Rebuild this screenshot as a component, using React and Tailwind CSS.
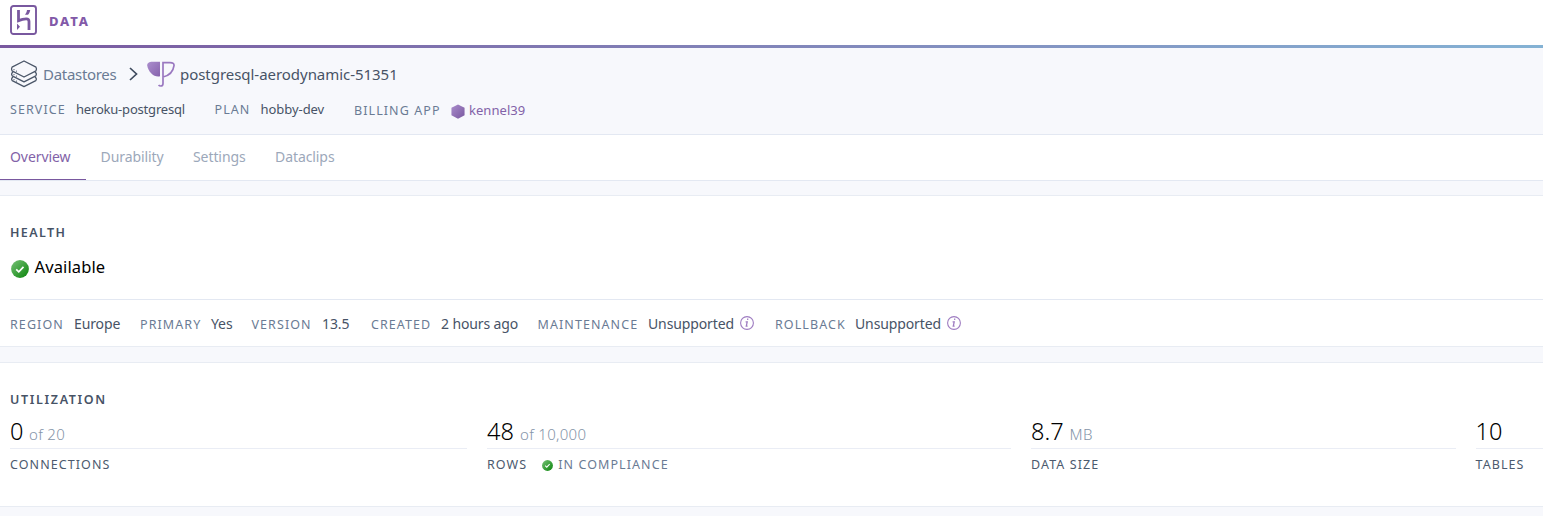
import React from "react";

const T = ({ className = "", children }) => (
  <span className={"block shrink-0 whitespace-nowrap " + className}>{children}</span>
);

const Check = ({ className }) => (
  <svg viewBox="0 0 18 18" className={"shrink-0 " + className}>
    <defs>
      <linearGradient id="ok" x1="0" y1="0" x2="1" y2="1">
        <stop offset="0.1" stopColor="#6cbb6c" />
        <stop offset="0.9" stopColor="#148a14" />
      </linearGradient>
    </defs>
    <circle cx="9" cy="9" r="8.9" fill="url(#ok)" />
    <path d="M5.200 9.300 7.800 11.800l4.700-4.900" fill="none" stroke="#fff" strokeWidth="1.700" />
  </svg>
);

const Info = () => (
  <svg viewBox="0 0 14 14" className="mt-[16px] h-[14px] w-[14px] shrink-0" fill="none" stroke="#9e7cc1">
    <circle cx="7" cy="7" r="6.4" strokeWidth="1.1" />
    <path d="M5.6 5.9h1.6L6.3 10.2h1.3" strokeWidth="1.3" />
    <path d="M7.1 3.2h1.2" strokeWidth="1.5" />
  </svg>
);

const Logo = () => (
  <svg viewBox="0 0 27 30" className="h-[30px] w-[27px] shrink-0">
    <rect x="1" y="1" width="25" height="28" rx="2.5" fill="none" stroke="#79589f" strokeWidth="1.900" />
    <path d="M8.500 5v10.600c2.500-1.100 5-1.800 7.700-1.800 2.300 0 2.800 1.200 2.800 2.600V25" fill="none" stroke="#79589f" strokeWidth="2.800" />
    <path d="M7 18.500v6.500l3-3.250zM15 9.700c1.200-1.500 1.800-3 2-4.700h3.200c-.2 1.800-.9 3.300-2.200 4.700z" fill="#79589f" />
  </svg>
);

const Stack = () => (
  <svg viewBox="0 0 28 28" className="h-[28px] w-[28px] shrink-0" fill="none" stroke="#4a5668" strokeWidth="1.300" strokeLinejoin="round">
    <path d="M14 1 26 7.200Q27 9 26 10.800L14 17 2 10.800Q1 9 2 7.200z" />
    <path d="M3 12 1.800 13.200Q1.300 14.500 2.200 15.800L14 21.800l11.800-6Q26.700 14.500 26.200 13.200L25 12" />
    <path d="M3 17 1.800 18.200Q1.300 19.500 2.200 20.600L14 26.600l11.800-6Q26.700 19.500 26.200 18.200L25 17" />
    <path d="M4 9.500v.1M6.500 11v.1M4 14.500v.1M6.500 16v.1M4 19.500v.1M6.500 21v.1" strokeWidth="1.200" strokeLinecap="round" />
  </svg>
);

const Postgres = () => (
  <svg viewBox="0 0 28 26" className="h-[26px] w-[28px] shrink-0">
    <defs>
      <linearGradient id="pg" x1="0" y1="0" x2="1" y2="1">
        <stop stopColor="#ab8ecd" />
        <stop offset="1" stopColor="#8662ac" />
      </linearGradient>
    </defs>
    <path d="M.200 4.500C0 2 2.500.800 5 .800h8v14.500C7 16.500 1.500 11.500.200 4.500z" fill="url(#pg)" />
    <path d="M16 22V1.600H23c3 0 4.200 1 4 3-.8 6-5 10-11 11.400M16 20v2.500c0 1.700-.8 2.500-2.200 2.500-1 0-1.700-.3-2.200-1" fill="none" stroke="#9a78c0" strokeWidth="1.700" />
  </svg>
);

const tone = "text-[#6a7b94]";
const value = "text-[#475366]";
const label = "text-[12.500px] tracking-[1.080px] ";

function Meta({ w, lw, name, text, info }) {
  return (
    <div className="flex shrink-0" style={{ width: w }}>
      <div className="shrink-0" style={{ width: lw }}>
        <T className={label + "leading-[49px] " + tone}>{name}</T>
      </div>
      <T className={"text-[14px] leading-[48px] tracking-[-0.120px] " + value}>{text}</T>
      {info && <div className="ml-auto"><Info /></div>}
    </div>
  );
}

function Metric({ width, num, numGap, unit, name, extra }) {
  return (
    <div className="shrink-0" style={{ width }}>
      <div className="flex h-[34px] items-baseline border-b border-[#eaedf5]">
        <div style={{ width: numGap }} className="shrink-0">
          <T className="text-[23.500px] font-light leading-[32px] text-black">{num}</T>
        </div>
        <T className="text-[15px] font-light tracking-[0.300px] text-[#8494a8]">{unit}</T>
      </div>
      <div className="flex h-[32px] items-center">
        <T className={label + "text-[#4c5a6e]"}>{name}</T>
        {extra}
      </div>
    </div>
  );
}

export default function App() {
  return (
    <div className="h-[516px] w-[1543px] overflow-hidden bg-[#f7f8fc] font-['Noto_Sans',sans-serif] font-normal">
      <header className="flex h-[45px] bg-white pl-[10px] pt-[5px]">
        <Logo />
        <T className="ml-[12px] text-[13px] font-extrabold leading-[33px] tracking-[1.800px] text-[#8259a8]">DATA</T>
      </header>
      <div className="h-[3px] bg-linear-to-r from-[#79589f] to-[#84b2d4]" />
      <div className="h-[87px] border-b border-[#e3e8f2]">
        <div className="flex h-[52px] items-center pl-[10px]">
          <Stack />
          <div className="ml-[5px] w-[86px]"><T className={"text-[15px] tracking-[-0.300px] " + tone}>Datastores</T></div>
          <svg viewBox="0 0 9 14" className="w-[9px]" fill="none" stroke="#3f4b5e" strokeWidth="1.700"><path d="m1 1 6.500 6L1 13" /></svg>
          <div className="ml-[9px]"><Postgres /></div>
          <T className={"ml-[5px] text-[15px] tracking-[-0.040px] " + value}>postgresql-aerodynamic-51351</T>
        </div>
        <div className="flex h-[20px] items-center pl-[10px]">
          <div className="w-[66px]"><T className={label + tone}>SERVICE</T></div>
          <div className="w-[138.500px]"><T className={"text-[13px] tracking-[-0.200px] " + value}>heroku-postgresql</T></div>
          <div className="w-[46px]"><T className={label + tone}>PLAN</T></div>
          <div className="w-[93.500px]"><T className={"text-[13px] tracking-[-0.050px] " + value}>hobby-dev</T></div>
          <div className="w-[96.500px] pt-[2px]"><T className={label + tone}>BILLING APP</T></div>
          <svg viewBox="0 0 14 16" className="mt-[2px] h-[15px] w-[14px]">
            <defs><linearGradient id="hex" x1="0" y1="0" x2="1" y2="1"><stop stopColor="#aa8dcc" /><stop offset="1" stopColor="#79589f" /></linearGradient></defs>
            <path d="M7 .500 14 4v8l-7 3.700L0 12V4z" fill="url(#hex)" />
          </svg>
          <T className="ml-[4.500px] mt-[2px] text-[13px] tracking-[0.050px] text-[#8262a8]">kennel39</T>
        </div>
      </div>
      <nav className="flex h-[46px] border-b border-[#e3e8f2] bg-white text-[14px] leading-[44px] tracking-[-0.080px] text-[#9ca8ba]">
        <div className="h-[45px] w-[86px] border-b border-[#79589f] pl-[10px] text-[#8262a8]"><T>Overview</T></div>
        <div className="w-[92px] pl-[14.500px]"><T>Durability</T></div>
        <div className="w-[83px] pl-[15px]"><T>Settings</T></div>
        <div className="pl-[14px]"><T>Dataclips</T></div>
      </nav>
      <section className="mt-[14px] h-[152px] border-y border-[#e8ecf3] bg-white pl-[10px]">
        <T className="pt-[27px] text-[12.500px] font-semibold leading-[20px] tracking-[1.400px] text-[#475366]">HEALTH</T>
        <div className="flex h-[57px] border-b border-[#e3e8f2] pt-[17px]">
          <Check className="ml-[1px] h-[18px] w-[18px]" />
          <T className="-mt-[3px] ml-[5.500px] text-[16.500px] leading-[20px] tracking-[0.120px] text-black">Available</T>
        </div>
        <div className="flex h-[46px]">
          <Meta w={130} lw={64} name="REGION" text="Europe" />
          <Meta w={111.5} lw={71} name="PRIMARY" text="Yes" />
          <Meta w={119.5} lw={70.5} name="VERSION" text="13.5" />
          <Meta w={166.5} lw={70} name="CREATED" text="2 hours ago" />
          <Meta w={216.5} lw={110.5} name="MAINTENANCE" text="Unsupported" info />
          <div className="w-[21px]" />
          <Meta w={186} lw={80} name="ROLLBACK" text="Unsupported" info />
        </div>
      </section>
      <section className="mt-[15px] h-[145px] border-y border-[#e8ecf3] bg-white pl-[10px]">
        <T className="pt-[27px] text-[12.500px] font-semibold leading-[20px] tracking-[1.650px] text-[#475366]">UTILIZATION</T>
        <div className="mt-[5px] flex gap-[20px]">
          <Metric width={457} num="0" numGap={19} unit="of 20" name="CONNECTIONS" />
          <Metric width={524} num="48" numGap={33} unit="of 10,000" name="ROWS" extra={
            <>
              <Check className="ml-[15px] h-[11px] w-[11px]" />
              <T className={"ml-[5px] " + label + tone}>IN COMPLIANCE</T>
            </>
          } />
          <Metric width={424.5} num="8.7" numGap={38.5} unit="MB" name="DATA SIZE" />
          <Metric width={100} num="10" numGap={30} unit="" name="TABLES" />
        </div>
      </section>
    </div>
  );
}
